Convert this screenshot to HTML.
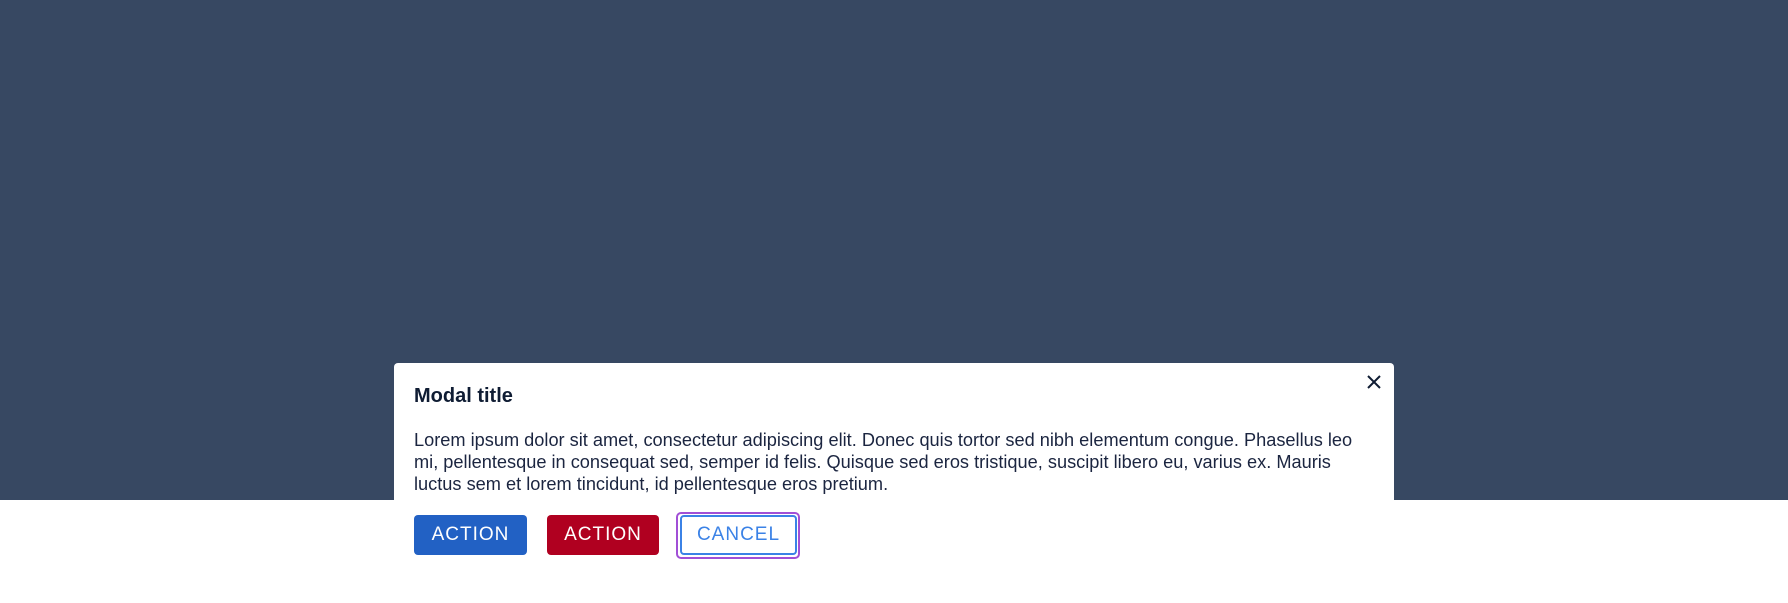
<!DOCTYPE html>
<html><head><style>
html,body{margin:0;padding:0;width:1788px;height:586px;overflow:hidden;background:#fff;font-family:"Liberation Sans",sans-serif;}
.top{position:absolute;left:0;top:0;width:1788px;height:500px;background:#374862;}
.modal{position:absolute;left:394px;top:363px;width:1000px;height:240px;background:#fff;border-radius:4px;}
.title{position:absolute;left:20px;top:22px;font-size:20px;font-weight:bold;color:#0f1c33;}
.body{position:absolute;left:20px;top:66px;width:960px;font-size:18.2px;line-height:22px;color:#1b2540;}
.close{position:absolute;left:972px;top:11px;}
.btn{position:absolute;top:152px;height:40px;border-radius:4px;font-size:19px;letter-spacing:1px;color:#fff;display:flex;align-items:center;justify-content:center;box-sizing:border-box;}
</style></head><body>
<div class="top"></div>
<div class="modal">
<div class="title">Modal title</div>
<svg class="close" width="16" height="16" viewBox="0 0 16 16"><path d="M2 2L14 14M14 2L2 14" stroke="#0f1c33" stroke-width="2"/></svg>
<div class="body">Lorem ipsum dolor sit amet, consectetur adipiscing elit. Donec quis tortor sed nibh elementum congue. Phasellus leo mi, pellentesque in consequat sed, semper id felis. Quisque sed eros tristique, suscipit libero eu, varius ex. Mauris luctus sem et lorem tincidunt, id pellentesque eros pretium.</div>
<div class="btn" style="left:20px;width:113px;background:#2261c4;">ACTION</div>
<div class="btn" style="left:153px;width:112px;background:#b00020;">ACTION</div>
<div style="position:absolute;left:282px;top:149px;width:124px;height:47px;border:2px solid #a14fd6;border-radius:5px;box-sizing:border-box;"></div>
<div class="btn" style="left:286px;width:117px;background:#fff;border:2px solid #3b82e6;color:#3b82e6;">CANCEL</div>
</div>
</body></html>
